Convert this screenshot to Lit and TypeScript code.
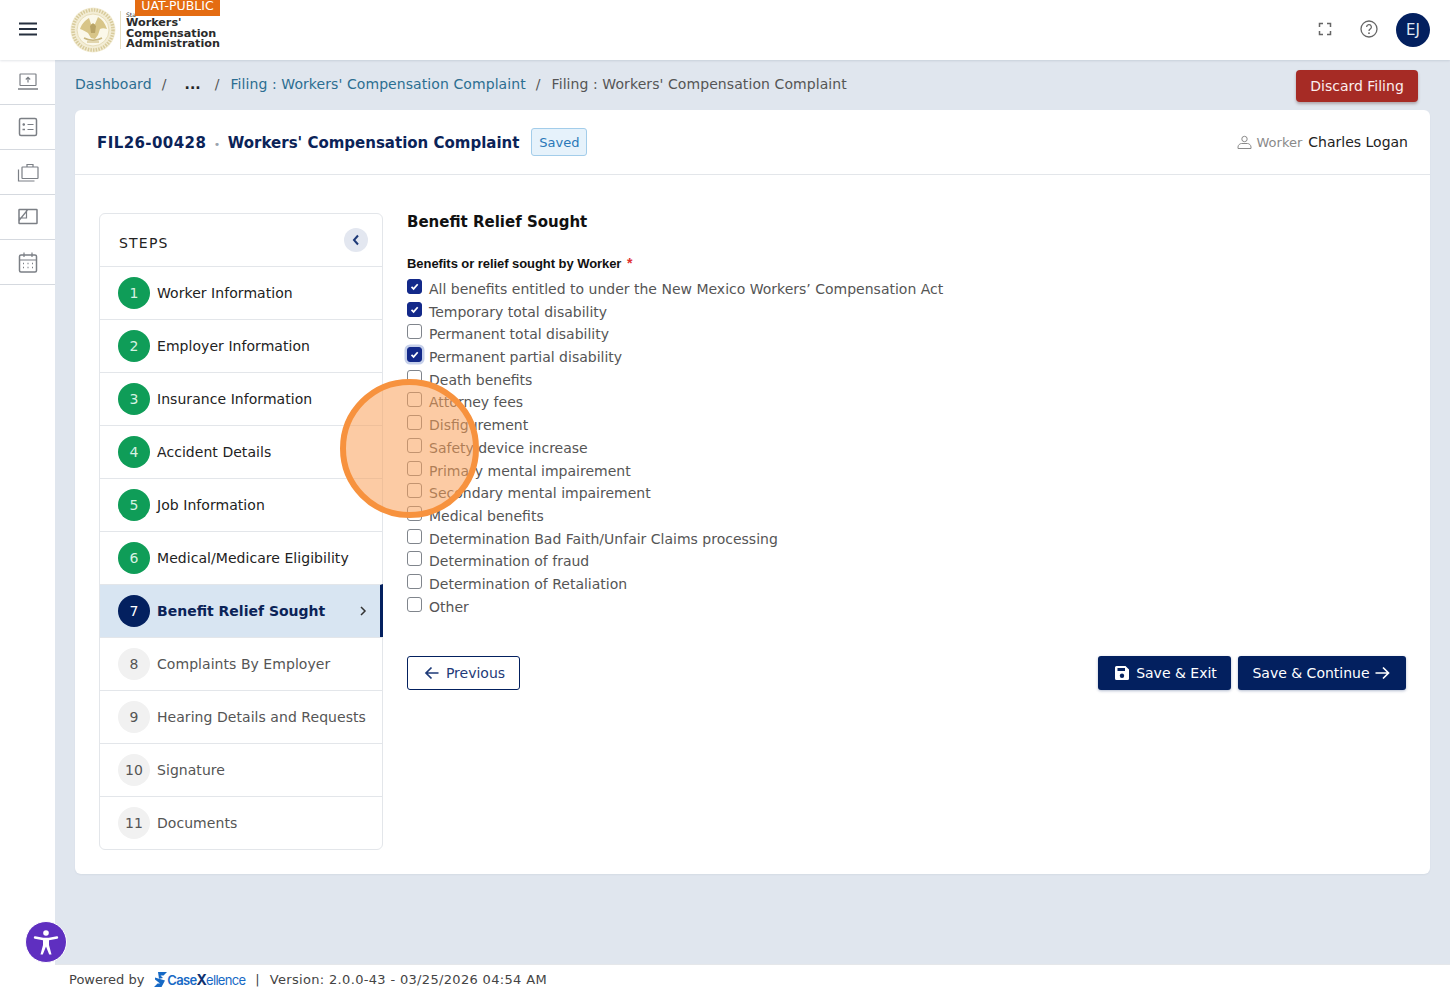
import { LitElement, html, css, svg } from "lit";
import { customElement } from "lit/decorators.js";
import { classMap } from "lit/directives/class-map.js";

const STEPS = [
  "Worker Information",
  "Employer Information",
  "Insurance Information",
  "Accident Details",
  "Job Information",
  "Medical/Medicare Eligibility",
  "Benefit Relief Sought",
  "Complaints By Employer",
  "Hearing Details and Requests",
  "Signature",
  "Documents",
];
const ACTIVE_STEP = 7;

const BENEFITS: [string, boolean, boolean?][] = [
  ["All benefits entitled to under the New Mexico Workers’ Compensation Act", true],
  ["Temporary total disability", true],
  ["Permanent total disability", false],
  ["Permanent partial disability", true, true],
  ["Death benefits", false],
  ["Attorney fees", false],
  ["Disfigurement", false],
  ["Safety device increase", false],
  ["Primary mental impairement", false],
  ["Secondary mental impairement", false],
  ["Medical benefits", false],
  ["Determination Bad Faith/Unfair Claims processing", false],
  ["Determination of fraud", false],
  ["Determination of Retaliation", false],
  ["Other", false],
];

const RAIL_ICONS = [
  svg`<rect x="3" y="3" width="16" height="11.500" rx=".5"/><path d="M1 18h20" stroke-width="1.500"/><path d="M11 11.500V6.500M8.800 8.500 11 6.300l2.200 2.200"/>`,
  svg`<rect x="2.500" y="2.500" width="17" height="17" rx="1.500" stroke-width="1.500"/><path d="M10.500 8.500h6M10.500 13.500h6"/><path d="M5.500 8.500h2.500M6.700 7.300v2.400M5.500 13.500h2.500" stroke-width="1.500"/>`,
  svg`<rect x="5" y="6" width="16" height="11.500" rx=".5"/><path d="M10 6V3.500h6V6M1.500 8.500v11.500h16" />`,
  svg`<rect x="2" y="3.500" width="18" height="14" rx=".5" stroke-width="1.500"/><path d="M2 14.500 10.500 4M9.500 3.500v8.500H2"/>`,
  svg`<rect x="2.500" y="4" width="17" height="17" rx="1.500" stroke-width="1.500"/><path d="M2.500 9h17M7 1.500V6M15 1.500V6"/><path d="M6 12.500h1M10.500 12.500h1M15 12.500h1M6 16.500h1M10.500 16.500h1M15 16.500h1" stroke-width="1.500"/>`,
];

@customElement("app-root")
export class AppRoot extends LitElement {
  static styles = css`
    :host {
      display: block;
      position: relative;
      width: 1450px;
      height: 992px;
      overflow: hidden;
      background: #e0e6ee;
      font-family: "DejaVu Sans", sans-serif;
      font-size: 14px;
      color: #222;
    }
    .page {
      display: grid;
      grid-template-rows: 60px 1fr 28px;
      grid-template-columns: 55px 1fr;
      height: 100%;
    }
    /* top bar */
    .topbar {
      grid-column: 1 / -1;
      display: flex;
      align-items: center;
      background: #fff;
      box-shadow: 0 1px 2px rgba(30, 50, 80, 0.12);
      z-index: 2;
      padding-right: 20px;
    }
    .burger {
      width: 55px;
      display: flex;
      justify-content: center;
      margin-top: -2px;
    }
    .logo {
      display: flex;
      align-items: center;
      align-self: flex-start;
      margin-left: 15px;
      position: relative;
      height: 59px;
    }
    .logo-rule {
      width: 1px;
      height: 38px;
      background: #e6dfc4;
      margin: 0 5px 0 4px;
    }
    .logo-text {
      font-size: 11.2px;
      line-height: 10.8px;
      font-weight: 700;
      color: #2a2a2a;
      padding-top: 2px;
    }
    .logo-state {
      display: block;
      font-size: 6px;
      line-height: 7px;
      font-weight: 400;
    }
    .env {
      position: absolute;
      left: 65px;
      top: 0;
      width: 85px;
      height: 16px;
      line-height: 12px;
      text-align: center;
      font-size: 12.5px;
      color: #fff;
      background: #e46c12;
    }
    .top-actions {
      margin-left: auto;
      display: flex;
      align-items: center;
    }
    .top-actions .expand {
      margin-right: 28px;
      margin-top: -2px;
      display: flex;
    }
    .top-actions .help {
      margin-right: 18px;
      margin-top: -2px;
      display: flex;
    }
    .avatar {
      width: 34px;
      height: 34px;
      border-radius: 50%;
      background: #03205f;
      color: #dfe6f2;
      display: flex;
      align-items: center;
      justify-content: center;
      font-size: 15px;
    }
    /* left rail */
    .rail {
      grid-row: 2 / 4;
      background: #fff;
      display: flex;
      flex-direction: column;
      position: relative;
      z-index: 1;
    }
    .rail-item {
      height: 45px;
      box-sizing: border-box;
      border-bottom: 1px solid #d5d9df;
      display: flex;
      align-items: center;
      justify-content: center;
    }
    .rail-item svg {
      fill: none;
      stroke: #7b7f85;
      stroke-width: 1.2;
    }
    /* main */
    .main {
      padding: 0 20px;
      min-width: 0;
    }
    .crumbs {
      display: flex;
      align-items: center;
      height: 50px;
      color: #555;
      letter-spacing: 0.08px;
    }
    .crumbs > * {
      margin-top: -2px;
    }
    .crumbs a {
      color: #2c6e91;
    }
    .crumbs .sep {
      margin-left: 10px;
      margin-right: 11px;
    }
    .crumbs .dots {
      color: #222;
      font-weight: 700;
      margin-left: 7px;
      margin-right: 14px;
    }
    .crumbs .sep.tight {
      margin-left: 0;
      margin-right: 11px;
    }
    .discard {
      margin-left: auto;
      margin-right: 12px;
      margin-top: 2px;
      width: 122px;
      height: 32px;
      border: 0;
      border-radius: 4px;
      background: #a62b25;
      color: #fbeeee;
      box-shadow: 0 2px 3px rgba(60, 20, 20, 0.3);
    }
    .card {
      background: #fff;
      border-radius: 6px;
      height: 764px;
      box-shadow: 0 1px 2px rgba(30, 50, 80, 0.06);
    }
    .card-head {
      height: 65px;
      box-sizing: border-box;
      border-bottom: 1px solid #e3e6ea;
      display: flex;
      align-items: center;
      padding: 0 22px;
    }
    .title {
      font-weight: 700;
      font-size: 15px;
      color: #0b2358;
      padding-top: 1px;
    }
    .title .id {
      letter-spacing: 0.42px;
    }
    .title .dot {
      color: #9aa3ad;
      margin: 0 7.500px;
      font-weight: 400;
      font-size: 11px;
    }
    .badge {
      margin-left: 12px;
      height: 28px;
      width: 56px;
      box-sizing: border-box;
      border: 1px solid #a3cdea;
      border-radius: 3px;
      background: #e6f2fb;
      color: #2a78b8;
      font-size: 13px;
      display: flex;
      align-items: center;
      justify-content: center;
    }
    .worker {
      margin-left: auto;
      display: flex;
      align-items: center;
      color: #222;
    }
    .worker svg {
      margin-right: 4px;
      fill: none;
      stroke: #8a8a8a;
      stroke-width: 1;
    }
    .worker span {
      color: #8a8a8a;
      font-size: 13px;
      margin-right: 6px;
    }
    .card-body {
      display: flex;
      padding: 38px 24px 0 24px;
      gap: 24px;
    }
    /* steps */
    .steps {
      width: 284px;
      height: 637px;
      flex: none;
      box-sizing: border-box;
      border: 1px solid #e3e6ea;
      border-radius: 6px;
    }
    .steps-head {
      height: 52px;
      box-sizing: border-box;
      display: flex;
      align-items: center;
      justify-content: space-between;
      padding: 0 14px 0 19px;
      letter-spacing: 1.2px;
      color: #222;
    }
    .steps-head .label {
      padding-top: 6px;
    }
    .collapse {
      width: 24px;
      height: 24px;
      border-radius: 50%;
      background: #e3e7f0;
      display: flex;
      align-items: center;
      justify-content: center;
    }
    .step {
      height: 53px;
      box-sizing: border-box;
      border-top: 1px solid #e3e6ea;
      display: flex;
      align-items: center;
      padding-left: 18px;
      gap: 7px;
      color: #222;
      letter-spacing: 0.05px;
    }
    .step.todo {
      color: #555;
    }
    .step.active {
      background: #d8e5f2;
      color: #0b2358;
      font-weight: 700;
      border-right: 3px solid #03205f;
      margin-right: -1px;
      letter-spacing: 0;
    }
    .num {
      width: 32px;
      height: 32px;
      border-radius: 50%;
      flex: none;
      background: #0f9d58;
      color: #d7f2e3;
      display: flex;
      align-items: center;
      justify-content: center;
      font-weight: 400;
    }
    .active .num {
      background: #03205f;
      color: #fff;
    }
    .todo .num {
      background: #f1f1f1;
      color: #555;
    }
    .chev {
      margin-left: auto;
      margin-right: 13px;
      display: flex;
    }
    /* form */
    .form {
      flex: 1;
      min-width: 0;
    }
    h2 {
      margin: 0;
      font-size: 15px;
      line-height: 18px;
      font-weight: 700;
      color: #111;
    }
    .field-label {
      font-family: "Liberation Sans", sans-serif;
      font-weight: 700;
      font-size: 13px;
      line-height: 15px;
      letter-spacing: -0.06px;
      margin-top: 25px;
      color: #111;
    }
    .req {
      color: #e03131;
      margin-left: 2px;
      font-size: 14px;
    }
    .checks {
      margin-top: 6.7px;
      display: flex;
      flex-direction: column;
    }
    .check {
      display: flex;
      align-items: center;
      height: 22.7px;
      color: #555;
      gap: 7px;
    }
    .box {
      width: 15px;
      height: 15px;
      box-sizing: border-box;
      border: 1px solid #80858c;
      border-radius: 3px;
      background: #fff;
      flex: none;
      margin-top: -5px;
      display: flex;
      align-items: center;
      justify-content: center;
    }
    .box.on {
      background: #13298a;
      border-color: #13298a;
    }
    .box.focus {
      box-shadow: 0 0 0 2.5px #c6d0ea;
    }
    .actions {
      display: flex;
      align-items: center;
      margin-top: 38.3px;
    }
    button {
      font: inherit;
      height: 34px;
      border-radius: 3px;
      display: inline-flex;
      align-items: center;
      justify-content: center;
      gap: 6px;
      padding: 0;
    }
    .prev {
      width: 113px;
      padding-left: 2px;
      background: #fff;
      color: #1e3a78;
      border: 1px solid #03205f;
    }
    .primary {
      background: #03205f;
      color: #fff;
      border: 0;
      box-shadow: 0 1px 3px rgba(3, 32, 95, 0.3);
    }
    .save-exit {
      width: 133px;
      margin-left: auto;
      padding-left: 2px;
    }
    .save-next {
      width: 168px;
      margin-left: 7px;
      padding-right: 2px;
      gap: 5px;
    }
    /* footer */
    .footer {
      background: #fff;
      border-top: 1px solid #e5e7ea;
      display: flex;
      align-items: center;
      padding: 2px 0 0 14px;
      font-size: 13px;
      color: #444;
      box-sizing: border-box;
      height: 28px;
    }
    .brand {
      display: inline-flex;
      align-items: center;
      margin: 0 10px;
      font-family: "Inter", sans-serif;
      font-weight: 600;
      font-size: 13px;
      letter-spacing: -0.7px;
      color: #1769c5;
    }
    .brand b {
      color: #10306e;
      font-weight: 700;
      font-size: 14px;
    }
    .brand i {
      font-style: normal;
      font-weight: 400;
      color: #1769c5;
    }
    .version {
      letter-spacing: 0.33px;
      margin-left: 10px;
    }
    /* overlays */
    .a11y {
      position: absolute;
      left: 25px;
      top: 921px;
      width: 42px;
      height: 42px;
      box-sizing: border-box;
      border-radius: 50%;
      border: 1.5px solid #fff;
      background: #5f2fc0;
      display: flex;
      align-items: center;
      justify-content: center;
      z-index: 3;
    }
    .pointer {
      position: absolute;
      left: 340px;
      top: 379px;
      width: 139px;
      height: 139px;
      box-sizing: border-box;
      border-radius: 50%;
      border: 6px solid #f7923e;
      background: rgba(250, 160, 90, 0.55);
      z-index: 4;
    }
  `;

  private seal() {
    return html`<svg width="46" height="46" viewBox="0 0 46 46">
      <circle cx="23" cy="23" r="22.500" fill="#f3edd5"/>
      <circle cx="23" cy="23" r="20" fill="none" stroke="#d8cb9c" stroke-width="3.500" stroke-dasharray="1.500 1.200"/>
      <circle cx="23" cy="23" r="16" fill="#fbf8ea" stroke="#e2d7ae" stroke-width=".8"/>
      <path d="M10 22c2-6 6-9 9-11l2 6h4l3-7c4 2 7 6 9 12-3-1-5-1-7 0l-2 6-3 4-4-1-3-5c-3-2-5-3-8-4z" fill="#d8c588"/>
      <path d="M20 19l3-3 3 3-1 7h-4z" fill="#b8a366"/>
      <path d="M14 31c5 3 13 3 18 0" fill="none" stroke="#c9b780" stroke-width="1.500"/>
      <path d="M17 35h12" stroke="#dacb9a" stroke-width="1.500"/>
    </svg>`;
  }

  private check() {
    return html`<svg width="11" height="11" viewBox="0 0 11 11"><path d="M2.500 5.800 4.600 7.900 8.700 3.300" fill="none" stroke="#fff" stroke-width="1.700"/></svg>`;
  }

  render() {
    return html`
      <div class="page">
        <header class="topbar">
          <div class="burger">
            <svg width="20" height="14" viewBox="0 0 20 14"><path d="M1 1.500h18M1 7h18M1 12.500h18" stroke="#26303f" stroke-width="2"/></svg>
          </div>
          <div class="logo">
            ${this.seal()}
            <div class="logo-rule"></div>
            <div class="logo-text">
              <span class="logo-state">Sta</span>
              Workers'<br />Compensation<br />Administration
            </div>
            <div class="env">UAT-PUBLIC</div>
          </div>
          <div class="top-actions">
            <span class="expand">
              <svg width="14" height="14" viewBox="0 0 14 14"><path d="M1.500 5V1.500H5M9 1.500h3.500V5M12.500 9v3.500H9M5 12.500H1.500V9" fill="none" stroke="#666" stroke-width="1.500"/></svg>
            </span>
            <span class="help">
              <svg width="18" height="18" viewBox="0 0 18 18"><circle cx="9" cy="9" r="8" fill="none" stroke="#666" stroke-width="1.300"/><path d="M6.600 7a2.400 2.400 0 1 1 3.500 2.200c-.8.4-1.100.9-1.100 1.800" fill="none" stroke="#666" stroke-width="1.300"/><circle cx="9" cy="13.200" r=".9" fill="#666"/></svg>
            </span>
            <div class="avatar">EJ</div>
          </div>
        </header>

        <nav class="rail">
          ${RAIL_ICONS.map(
            (icon) => html`<div class="rail-item"><svg width="22" height="22" viewBox="0 0 22 22">${icon}</svg></div>`
          )}
        </nav>

        <main class="main">
          <div class="crumbs">
            <a>Dashboard</a><span class="sep">/</span><span class="dots">...</span><span class="sep tight">/</span>
            <a>Filing : Workers' Compensation Complaint</a><span class="sep">/</span>
            <span>Filing : Workers' Compensation Complaint</span>
            <button class="discard">Discard Filing</button>
          </div>
          <section class="card">
            <div class="card-head">
              <div class="title"><span class="id">FIL26-00428</span><span class="dot">•</span>Workers' Compensation Complaint</div>
              <div class="badge">Saved</div>
              <div class="worker">
                <svg width="15" height="15" viewBox="0 0 15 15"><circle cx="7.500" cy="4" r="2.700"/><path d="M1 13.500v-1.500c0-2 2-3.500 3.500-3.500h6c1.500 0 3.500 1.500 3.500 3.500v1.500z"/></svg>
                <span>Worker</span>Charles Logan
              </div>
            </div>
            <div class="card-body">
              <aside class="steps">
                <div class="steps-head">
                  <div class="label">STEPS</div>
                  <div class="collapse">
                    <svg width="10" height="12" viewBox="0 0 10 12"><path d="M7 1.500 3 6l4 4.500" fill="none" stroke="#1e3a78" stroke-width="2"/></svg>
                  </div>
                </div>
                ${STEPS.map((s, i) => {
                  const n = i + 1;
                  return html`<div class=${classMap({ step: true, active: n === ACTIVE_STEP, todo: n > ACTIVE_STEP })}>
                    <div class="num">${n}</div>
                    <div>${s}</div>
                    ${n === ACTIVE_STEP
                      ? html`<div class="chev"><svg width="8" height="12" viewBox="0 0 8 12"><path d="M2 2l4 4-4 4" fill="none" stroke="#333" stroke-width="1.500"/></svg></div>`
                      : ""}
                  </div>`;
                })}
              </aside>
              <div class="form">
                <h2>Benefit Relief Sought</h2>
                <div class="field-label">Benefits or relief sought by Worker <span class="req">*</span></div>
                <div class="checks">
                  ${BENEFITS.map(
                    ([label, on, focus]) => html`<label class="check">
                      <span class=${classMap({ box: true, on, focus: !!focus })}>${on ? this.check() : ""}</span>
                      ${label}
                    </label>`
                  )}
                </div>
                <div class="actions">
                  <button class="prev">
                    <svg width="16" height="14" viewBox="0 0 16 14"><path d="M14.500 7H2M7.500 1.500 2 7l5.500 5.500" fill="none" stroke="#1e3a78" stroke-width="1.700"/></svg>
                    Previous
                  </button>
                  <button class="primary save-exit">
                    <svg width="16" height="16" viewBox="0 0 16 16"><path d="M2.500 1h9L15 4.500v9a1.500 1.500 0 0 1-1.500 1.500h-11A1.500 1.500 0 0 1 1 13.500v-11A1.500 1.500 0 0 1 2.500 1z" fill="#fff"/><rect x="3.500" y="3" width="7.500" height="3" fill="#03205f"/><circle cx="8" cy="10.800" r="2.200" fill="#03205f"/></svg>
                    Save &amp; Exit
                  </button>
                  <button class="primary save-next">
                    Save &amp; Continue
                    <svg width="15" height="14" viewBox="0 0 15 14"><path d="M.5 7h13M8 1.500 13.500 7 8 12.500" fill="none" stroke="#fff" stroke-width="1.700"/></svg>
                  </button>
                </div>
              </div>
            </div>
          </section>
        </main>

        <footer class="footer">
          Powered by
          <span class="brand">
            <svg width="13" height="15" viewBox="0 0 13 15"><path d="M4 0h9L9.500 3.500H6.500L9 6 5 6.800z" fill="#1769c5"/><path d="M1 5.500 5 6.800 11 8.500 7.500 15H0l3.500-3.500h2.500L1 7.500z" fill="#1769c5"/></svg>
            Case<b>X</b><i>ellence</i>
          </span>
          |<span class="version">Version: 2.0.0-43 - 03/25/2026 04:54 AM</span>
        </footer>
      </div>

      <div class="a11y">
        <svg width="34" height="34" viewBox="0 0 34 34"><circle cx="17" cy="8" r="2.800" fill="#fff"/><path d="M6 12.500l8 1.500h6l8-1.500" fill="none" stroke="#fff" stroke-width="2.400" stroke-linecap="round"/><path d="M14 14h6v6l2.500 9.500h-2.300L17 21.500l-3.200 8h-2.300L14 20z" fill="#fff"/></svg>
      </div>
      <div class="pointer"></div>
    `;
  }
}
